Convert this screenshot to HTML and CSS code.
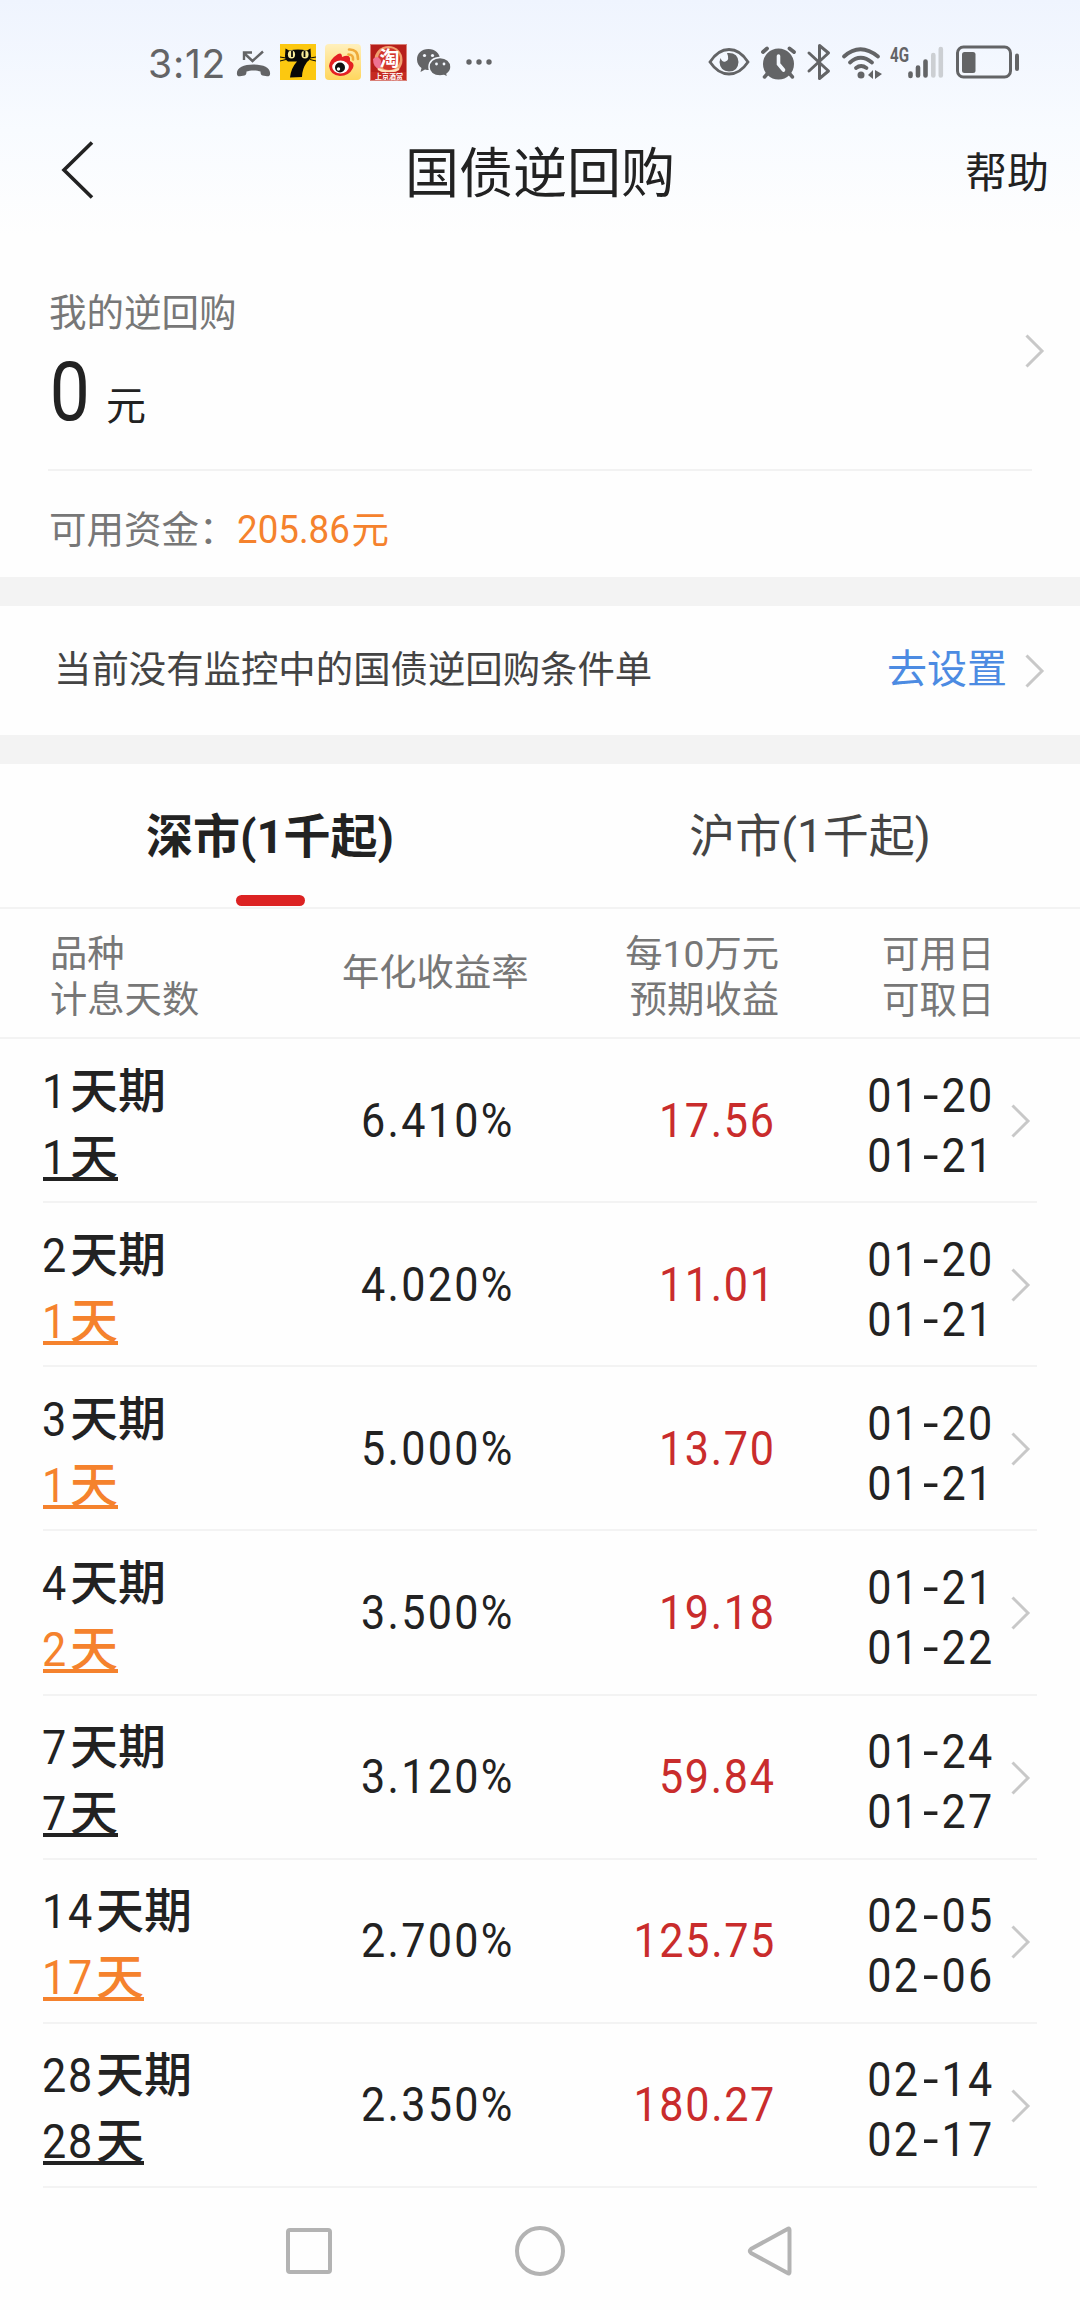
FILE: index.html
```html
<!DOCTYPE html>
<html lang="zh-CN">
<head>
<meta charset="utf-8">
<title>国债逆回购</title>
<link rel="stylesheet" href="styles.css">
</head>
<body>
<svg class="defs" width="0" height="0">
  <symbol id="chev" viewBox="0 0 20 34"><path d="M1.5 1.5 17 17 1.5 32.5" fill="none" stroke="#c8c8c8" stroke-width="3"/></symbol>
</svg>
<div class="screen">
  <div class="status">
    <div class="status-left">
      <span class="time">3:12</span>
      <svg width="36" height="36" viewBox="0 0 36 36" fill="none" stroke="#636466"><path d="M9.5 9.500 17.500 17 28 7.500M9 16V8.500H17" stroke-width="2.400"/><path d="M2 30.500C1 24 8 20.500 18.500 20.500S36 24 35 30.500C34.800 32 33.500 32.500 32 32.200L27.500 31.500C26 31 25.500 30 25.500 27.500 22 26 15 26 11.500 27.500 11.500 30 11 31 9.500 31.500L5 32.200C3.500 32.500 2.200 32 2 30.500Z" fill="#636466" stroke="none"/></svg>
      <svg width="36" height="36" viewBox="0 0 36 36"><path d="M0 0H36V36H0Z" fill="#fcc810"/><path d="M5.500 4.500 9 6.500Q18 4.500 27 6.500L30.500 4.500 31 13Q30 16 27 18 22 25 22 33L10 33.500Q11 24 17 17.500H8Q5 16 5 12Z" fill="#080808"/><path d="M0 13 6 14M0 17 6 15.500M30 14 36 13M30 15.500 36 17" stroke="#080808"/><ellipse cx="11.500" cy="10.500" rx="3.600" ry="4" fill="#f8ec9a"/><ellipse cx="25" cy="10.500" rx="3.600" ry="4" fill="#f8ec9a"/><path d="M12 7V13M24.500 7V13" stroke="#080808" stroke-width="1.800"/></svg>
      <svg width="36" height="36" viewBox="0 0 36 36"><defs><linearGradient id="wb" x2="0" y2="1"><stop stop-color="#fff0bd"/><stop offset="1" stop-color="#ffd65d"/></linearGradient></defs><rect width="36" height="36" rx="4" fill="url(#wb)"/><path d="M4 22Q5 15 13 10 17 8 17 13 24 10 25 14L25 17Q30 19 28 24 24 32 15 32 5 31 4 22Z" fill="#e41f23"/><ellipse cx="15.500" cy="23" rx="8.300" ry="6.500" fill="#fff"/><circle cx="15" cy="23.500" r="5" fill="#111"/><circle cx="13.500" cy="25" r="1.700" fill="#fff"/><path d="M24 5.500Q33 5 33 15M23.500 10.500Q28.500 10.500 28 15.500" fill="none" stroke="#efaa39" stroke-width="2.600" stroke-linecap="round"/></svg>
      <svg width="37" height="37" viewBox="0 0 37 37"><path d="M0 0H37V37H0Z" fill="#d98078"/><path d="M1 1H36V36H1Z" fill="#b71f1b"/><circle cx="18.500" cy="16" r="14" fill="#f1a06e"/><circle cx="19" cy="15" r="11" fill="#d2352c"/><path d="M3 15Q8 10 11 17L10 25Q3 24 3 15Z" fill="#ef7393"/><text class="tao" x="9.500" y="22">淘</text><path d="M8 25Q18 30 29 25" fill="none" stroke="#ffe0bd" stroke-width="2"/><path d="M1 28H36V36H1Z" fill="#c62a22"/><text class="tao-sub" x="5" y="35">上京酒赏</text></svg>
      <svg width="36" height="36" viewBox="0 0 36 36"><path d="M12.500 5C5.500 5 1 9.500 1 15.500 1 19.500 3 22 5.500 24L4.500 28 9 25.500Q11 26 13 26C20 26 24 21.500 24 15.500S19 5 12.500 5Z" fill="#636466"/><path d="M24 13.500C17.500 13.500 13 17.500 13 23S17.500 32 24 32Q26 32 28 31.500L32 33.500 31 30Q35 27 35 23C35 17.500 30.500 13.500 24 13.500Z" fill="#636466" stroke="#f4f8fe" stroke-width="1.500"/><g fill="#f4f8fe"><circle cx="8.500" cy="11.500" r="1.600"/><circle cx="16.500" cy="11.500" r="1.600"/><circle cx="20.500" cy="20" r="1.400"/><circle cx="28" cy="20" r="1.400"/></g></svg>
      <svg width="36" height="36" viewBox="0 0 36 36" fill="#636466"><circle cx="8" cy="18" r="2.700"/><circle cx="18" cy="18" r="2.700"/><circle cx="28" cy="18" r="2.700"/></svg>
    </div>
    <div class="status-right">
      <svg width="42" height="36" viewBox="0 0 42 36"><path d="M2 18Q10 5.500 21 5.500T40 18Q32 30 21 30T2 18Z" fill="none" stroke="#636466" stroke-width="2.800"/><path d="M19 9Q30 8 30.500 18 30 27.500 21 27.500 12 27 11.500 18L12.500 14Q14 18.500 17.500 17.500 22 16 19 9Z" fill="#636466"/></svg>
      <svg width="36" height="36" viewBox="0 0 36 36" stroke="#636466" stroke-linecap="round" fill="none"><circle cx="18.500" cy="20" r="15.500" fill="#636466" stroke="none"/><path d="M3 8 7 4.500M29.500 4.500 34 8" stroke-width="3.800"/><path d="M8 29 4.500 33M29 29 32.500 33" stroke-width="3.500"/><path d="M18.500 12V20L23.500 26" stroke="#f4f8fe" stroke-width="3.600"/></svg>
      <svg width="25" height="40" viewBox="0 0 25 40" fill="none" stroke="#636466" stroke-width="3" stroke-linejoin="round" stroke-linecap="round"><path d="M3 11 22.500 29 13.500 36.500V3.500L22.500 11 3 29"/></svg>
      <svg class="wifi" width="38" height="36" viewBox="0 0 38 36" fill="none" stroke="#636466" stroke-width="3.800" stroke-linecap="round"><path d="M3 12.500Q19 -2 37 12.500M9 18.500Q19.500 9 31 18.500M15 24Q20 20 25.500 24"/><circle cx="20" cy="31" r="3.500" fill="#636466" stroke="none"/><path d="M27 31 32 26V35ZM34 26V35L41 30Z" fill="#636466" stroke="none"/></svg>
      <svg width="57" height="36" viewBox="0 0 57 36"><text class="net" x="1" y="17.500" textLength="19" lengthAdjust="spacingAndGlyphs">4G</text><path d="M21.500 29.500V32" stroke="#636466" stroke-width="4.600" stroke-linecap="round"/><path d="M29 23.500V31.500M36.500 17.500V31.500" stroke="#636466" stroke-width="4.600" stroke-linecap="round"/><path d="M44.300 11V31.500M51.800 5V31.500" stroke="#cccfd3" stroke-width="4.600" stroke-linecap="round"/></svg>
      <svg width="64" height="36" viewBox="0 0 64 36"><rect x="1.500" y="3" width="53" height="30" rx="6" fill="none" stroke="#636466" stroke-width="3"/><rect x="6" y="8" width="13.500" height="21" rx="2.500" fill="#636466"/><path d="M61 11.500V25" stroke="#636466" stroke-width="4" stroke-linecap="round"/></svg>
    </div>
  </div>
  <header class="nav">
    <svg width="34" height="58" viewBox="0 0 34 58"><path d="M31 1.500 3 29 31 56.500" fill="none" stroke="#222" stroke-width="3.600"/></svg>
    <h1>国债逆回购</h1>
    <a class="help">帮助</a>
  </header>
  <section class="mine">
    <div class="mine-top">
      <div>
        <div class="label">我的逆回购</div>
        <div class="amount"><b class="n">0</b><span>元</span></div>
      </div>
      <svg class="chev"><use href="#chev"/></svg>
    </div>
    <div class="funds"><span>可用资金：</span><span class="orange"><b class="n">205.86</b>元</span></div>
  </section>
  <section class="cond">
    <span>当前没有监控中的国债逆回购条件单</span>
    <a>去设置</a>
    <svg class="chev"><use href="#chev"/></svg>
  </section>
  <nav class="tabs">
    <div class="tab on">深市(1千起)</div>
    <div class="tab">沪市(1千起)</div>
  </nav>
  <div class="grid head">
    <div>品种<br>计息天数</div>
    <div>年化收益率</div>
    <div>每10万元<br>预期收益</div>
    <div>可用日<br>可取日</div>
  </div>
  <div class="grid row"><div class="term"><span><b class="n">1</b>天期</span><u><b class="n">1</b>天</u></div><div class="rate"><b class="n">6.410%</b></div><div class="gain"><b class="n">17.56</b></div><div class="dates"><b class="n">01<i>-</i>20</b><b class="n">01<i>-</i>21</b></div><svg class="chev"><use href="#chev"/></svg></div>
  <div class="grid row"><div class="term"><span><b class="n">2</b>天期</span><u class="orange"><b class="n">1</b>天</u></div><div class="rate"><b class="n">4.020%</b></div><div class="gain"><b class="n">11.01</b></div><div class="dates"><b class="n">01<i>-</i>20</b><b class="n">01<i>-</i>21</b></div><svg class="chev"><use href="#chev"/></svg></div>
  <div class="grid row"><div class="term"><span><b class="n">3</b>天期</span><u class="orange"><b class="n">1</b>天</u></div><div class="rate"><b class="n">5.000%</b></div><div class="gain"><b class="n">13.70</b></div><div class="dates"><b class="n">01<i>-</i>20</b><b class="n">01<i>-</i>21</b></div><svg class="chev"><use href="#chev"/></svg></div>
  <div class="grid row"><div class="term"><span><b class="n">4</b>天期</span><u class="orange"><b class="n">2</b>天</u></div><div class="rate"><b class="n">3.500%</b></div><div class="gain"><b class="n">19.18</b></div><div class="dates"><b class="n">01<i>-</i>21</b><b class="n">01<i>-</i>22</b></div><svg class="chev"><use href="#chev"/></svg></div>
  <div class="grid row"><div class="term"><span><b class="n">7</b>天期</span><u><b class="n">7</b>天</u></div><div class="rate"><b class="n">3.120%</b></div><div class="gain"><b class="n">59.84</b></div><div class="dates"><b class="n">01<i>-</i>24</b><b class="n">01<i>-</i>27</b></div><svg class="chev"><use href="#chev"/></svg></div>
  <div class="grid row"><div class="term two"><span><b class="n">14</b>天期</span><u class="orange"><b class="n">17</b>天</u></div><div class="rate"><b class="n">2.700%</b></div><div class="gain"><b class="n">125.75</b></div><div class="dates"><b class="n">02<i>-</i>05</b><b class="n">02<i>-</i>06</b></div><svg class="chev"><use href="#chev"/></svg></div>
  <div class="grid row"><div class="term two"><span><b class="n">28</b>天期</span><u><b class="n">28</b>天</u></div><div class="rate"><b class="n">2.350%</b></div><div class="gain"><b class="n">180.27</b></div><div class="dates"><b class="n">02<i>-</i>14</b><b class="n">02<i>-</i>17</b></div><svg class="chev"><use href="#chev"/></svg></div>
  <footer class="keys">
    <svg width="52" height="52" viewBox="0 0 52 52"><rect x="5" y="5" width="42" height="42" rx="2" /></svg>
    <svg width="52" height="52" viewBox="0 0 52 52"><circle cx="26" cy="26" r="23"/></svg>
    <svg width="52" height="52" viewBox="0 0 52 52"><path d="M44.500 5V47Q44.500 49.500 42.500 48L6 28Q3.500 26 6 24L42.500 4Q44.500 2.500 44.500 5Z"/></svg>
  </footer>
</div>
</body>
</html>
```
FILE: styles.css
```css
* { box-sizing: border-box; }
body { margin: 0; background: #fdfdfd; }
.defs { position: absolute; }
.screen {
  width: 1080px; height: 2310px; overflow: hidden;
  display: flex; flex-direction: column;
  background: linear-gradient(#eff4fe 0, #f8fbff 130px, #fefefe 235px);
  font-family: Roboto, "Noto Sans CJK SC", sans-serif;
  color: #222;
}
svg { flex: none; overflow: visible; }
.n { font-weight: 400; }
.orange { color: #f5822d; }
.chev { width: 20px; height: 34px; }

.status {
  height: 124px; padding: 0 60px 0 148px;
  display: flex; justify-content: space-between; align-items: center;
}
.status-left { display: flex; align-items: center; gap: 9px; }
.status-right { display: flex; align-items: center; gap: 10px; }
.time { width: 78px; font: 400 39px/50px Inter, sans-serif; color: #636466; letter-spacing: .8px; padding-top: 3px; }
.tao { font: 700 20px "Noto Sans CJK SC", sans-serif; fill: #fff; }
.tao-sub { font: 700 7px "Noto Sans CJK SC", sans-serif; fill: #fff; }
.net { font: 700 21px Roboto, sans-serif; fill: #636466; }

.nav {
  height: 100px; padding: 0 31px 0 61px;
  display: grid; grid-template-columns: 100px 1fr 84px; align-items: center;
}
.nav svg { margin-top: -11px; }
.nav h1 { margin: 0; padding-right: 46px; text-align: center; font-size: 54px; font-weight: 400; line-height: 102px; }
.help { font-size: 42px; line-height: 50px; margin-top: -2px; }

.mine { height: 353px; }
.mine-top {
  height: 247px; margin: 0 48px; border-bottom: 2px solid #f2f2f2;
  display: flex; justify-content: space-between;
}
.label { padding-top: 64px; font-size: 37.500px; line-height: 50px; color: #777; margin-left: 1px; }
.amount { display: flex; align-items: baseline; line-height: 110px; }
.amount .n { width: 45px; font-size: 81px; transform: scaleX(.88); transform-origin: 14px 50%; }
.amount span { font-size: 40px; margin-left: 13px; }
.mine-top .chev { margin: 110px -13px 0 0; }
.funds { display: flex; padding-left: 49px; height: 106px; line-height: 118px; font-size: 37.500px; color: #777; }
.funds .n { font-size: 39.500px; display: inline-block; width: 115px; line-height: 60px; transform: scaleX(.93); transform-origin: 0 50%; }

.cond {
  height: 187px; border: solid #f3f3f3; border-width: 29px 0;
  display: flex; align-items: center; padding: 0 35px 0 54px;
  font-size: 37.400px; color: #444;
}
.cond span, .cond a { line-height: 50px; margin-top: -1px; }
.cond a { margin-left: auto; margin-right: 18px; color: #4c8be2; font-size: 40px; }

.tabs { height: 145px; border-bottom: 2px solid #f3f3f3; display: grid; grid-template-columns: 1fr 1fr; }
.tab { text-align: center; font-size: 46px; line-height: 145px; color: #444; height: 143px; }
.tab.on { font-size: 47px; font-weight: 700; color: #222; display: flex; flex-direction: column; align-items: center; }
.tab.on::after { content: ""; flex: none; width: 69px; height: 11px; border-radius: 6px; background: #dc2222; margin-top: -14px; }

.grid { display: grid; align-items: center; }
.head {
  grid-template-columns: 292px 252px 250px 1fr;
  height: 130px; padding-left: 50px; border-bottom: 2px solid #f3f3f3;
  font-size: 37.300px; line-height: 46px; color: #777;
}
.head div { padding-top: 8px; }
.head div:nth-child(2) { padding-top: 0; }
.head div:nth-child(3) { text-align: right; padding-right: 65px; }
.head div:nth-child(4) { padding-left: 38px; font-size: 37.500px; }
.row {
  grid-template-columns: 280px 230px 222px 219px 43px;
  height: 164.140px; margin: 0 43px; border-bottom: 2px solid #f3f3f3;
  font-size: 49px; line-height: 60px; flex: none;
}
.row .n { display: inline-block; letter-spacing: 2.600px; transform: scaleX(.88); transform-origin: 100% 50%; }
.row i { display: inline-block; width: 24px; font-style: normal; text-align: center; letter-spacing: 0; transform: scaleX(1.3); }
.term { display: flex; flex-direction: column; align-items: flex-start; font-size: 48px; line-height: 66px; font-weight: 500; margin-top: 9px; }
.row .term .n { width: 27px; font-size: 49px; line-height: 60px; letter-spacing: 2px; transform-origin: -8px 50%; }
.row .term.two .n { width: 53px; }
.term u { text-decoration: none; background: linear-gradient(currentColor, currentColor) 0 52px / 100% 4px no-repeat; }
.rate { text-align: right; padding: 1px 38px 0 0; }
.gain { text-align: right; color: #c92c2c; padding-top: 1px; margin-right: -1px; }
.row .gain .n { letter-spacing: 1.900px; }
.dates { display: flex; flex-direction: column; align-items: flex-end; padding-top: 11px; margin-right: -1px; }
.row .chev { margin: 2px 0 0 17px; }

.keys { flex: 1; display: flex; align-items: flex-start; justify-content: center; gap: 179px; padding-top: 37px; }
.keys svg { fill: none; stroke: #b3b3b3; stroke-width: 4px; }
```
